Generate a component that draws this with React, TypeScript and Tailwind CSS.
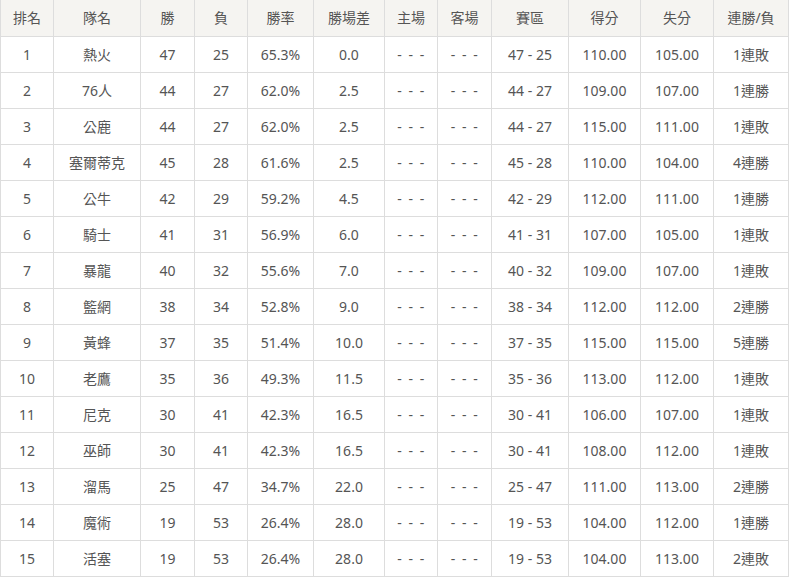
import React from "react";

const headers = ["排名", "隊名", "勝", "負", "勝率", "勝場差", "主場", "客場", "賽區", "得分", "失分", "連勝/負"];
const widths = [53, 87, 54, 53, 66, 71, 53, 54, 77, 72, 73, 75];

const rows: string[][] = [
  ["1", "熱火", "47", "25", "65.3%", "0.0", "47 - 25", "110.00", "105.00", "1連敗"],
  ["2", "76人", "44", "27", "62.0%", "2.5", "44 - 27", "109.00", "107.00", "1連勝"],
  ["3", "公鹿", "44", "27", "62.0%", "2.5", "44 - 27", "115.00", "111.00", "1連敗"],
  ["4", "塞爾蒂克", "45", "28", "61.6%", "2.5", "45 - 28", "110.00", "104.00", "4連勝"],
  ["5", "公牛", "42", "29", "59.2%", "4.5", "42 - 29", "112.00", "111.00", "1連勝"],
  ["6", "騎士", "41", "31", "56.9%", "6.0", "41 - 31", "107.00", "105.00", "1連敗"],
  ["7", "暴龍", "40", "32", "55.6%", "7.0", "40 - 32", "109.00", "107.00", "1連敗"],
  ["8", "籃網", "38", "34", "52.8%", "9.0", "38 - 34", "112.00", "112.00", "2連勝"],
  ["9", "黃蜂", "37", "35", "51.4%", "10.0", "37 - 35", "115.00", "115.00", "5連勝"],
  ["10", "老鷹", "35", "36", "49.3%", "11.5", "35 - 36", "113.00", "112.00", "1連敗"],
  ["11", "尼克", "30", "41", "42.3%", "16.5", "30 - 41", "106.00", "107.00", "1連敗"],
  ["12", "巫師", "30", "41", "42.3%", "16.5", "30 - 41", "108.00", "112.00", "1連敗"],
  ["13", "溜馬", "25", "47", "34.7%", "22.0", "25 - 47", "111.00", "113.00", "2連勝"],
  ["14", "魔術", "19", "53", "26.4%", "28.0", "19 - 53", "104.00", "112.00", "1連勝"],
  ["15", "活塞", "19", "53", "26.4%", "28.0", "19 - 53", "104.00", "113.00", "2連敗"],
];

export default function App() {
  return (
    <div className="w-[789px] h-[579px] overflow-hidden bg-white">
      <table
        className="table-fixed border-collapse w-[789px] text-[14px] text-[#555] text-center"
        style={{ fontFamily: '"Noto Sans", "Noto Sans CJK TC", sans-serif' }}
      >
        <colgroup>
          {widths.map((w, i) => (
            <col key={i} style={{ width: w }} />
          ))}
        </colgroup>
        <thead>
          <tr className="bg-[#f5f4f1]">
            {headers.map((h, i) => (
              <th key={i} className="h-[36px] p-0 font-normal border border-t-0 border-[#ddd]">
                {h}
              </th>
            ))}
          </tr>
        </thead>
        <tbody>
          {rows.map((r, ri) => {
            const cells = [r[0], r[1], r[2], r[3], r[4], r[5], "- - -", "- - -", r[6], r[7], r[8], r[9]];
            return (
              <tr key={ri}>
                {cells.map((c, ci) => (
                  <td
                    key={ci}
                    className={
                      ci === 6 || ci === 7
                        ? "h-[36px] p-0 border border-[#ddd] tracking-[1.5px] pl-[1px]"
                        : "h-[36px] p-0 border border-[#ddd]"
                    }
                  >
                    {c}
                  </td>
                ))}
              </tr>
            );
          })}
        </tbody>
      </table>
    </div>
  );
}
